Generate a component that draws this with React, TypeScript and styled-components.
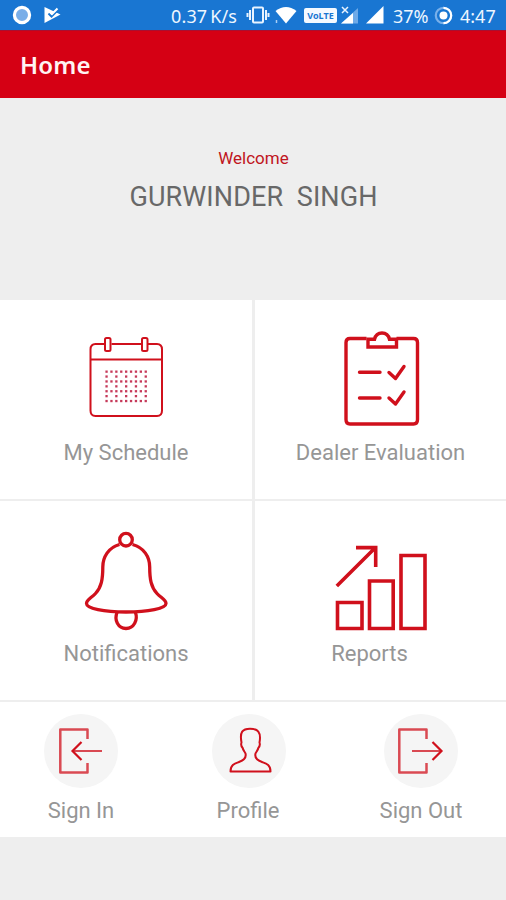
import React from 'react';
import styled, { createGlobalStyle } from 'styled-components';

const RED = '#d0101c';

const GlobalStyle = createGlobalStyle`
  * { box-sizing: border-box; }
  body { margin: 0; background: #eeeeee; font-family: Roboto, "Liberation Sans", sans-serif; }
  svg { display: block; flex: none; }
`;

const Screen = styled.div`
  width: 506px;
  height: 900px;
  display: flex;
  flex-direction: column;
  background: #eeeeee;
  overflow: hidden;
`;

const StatusBar = styled.div`
  height: 30px;
  flex: none;
  display: flex;
  align-items: center;
  background: #1976d2;
  color: #eef6ff;
`;

const StatusText = styled.span<{ $left: number; $width: number; $spacing?: number }>`
  flex: none;
  width: ${(p) => p.$width}px;
  margin-left: ${(p) => p.$left}px;
  padding-top: 1px;
  font: 400 18px/30px "Noto Sans", sans-serif;
  letter-spacing: ${(p) => p.$spacing ?? 0}px;
  word-spacing: -2px;
  white-space: nowrap;
`;

const StatusIcon = styled.svg<{ $left: number }>`
  margin-left: ${(p) => p.$left}px;
`;

const VolteBadge = styled.span`
  flex: none;
  width: 33px;
  height: 15px;
  margin-left: 7px;
  border-radius: 2px;
  background: #f4f9ff;
  color: #1976d2;
  font: 700 9px/15px "Noto Sans", sans-serif;
  text-align: center;
  white-space: nowrap;
`;

const AppBar = styled.header`
  height: 68px;
  flex: none;
  display: flex;
  align-items: center;
  padding: 1px 20px 0;
  background: #d50014;
  border-top: 1px solid #a90f30;
  color: #fff3f3;
`;

const Title = styled.h1`
  margin: 0;
  font: 600 24px/32px "Noto Sans", sans-serif;
  letter-spacing: 0.2px;
`;

const Greeting = styled.section`
  height: 201px;
  flex: none;
  display: flex;
  flex-direction: column;
  align-items: center;
  padding: 50px 0 0 1px;
`;

const Welcome = styled.div`
  font-size: 17px;
  line-height: 20px;
  color: #c01421;
`;

const UserName = styled.div`
  margin-top: 13px;
  font-size: 27px;
  line-height: 32px;
  letter-spacing: 0.1px;
  color: #686868;
  white-space: pre;
`;

const TileGrid = styled.main`
  flex: none;
  display: grid;
  grid-template-columns: 252px 251px;
  grid-template-rows: 199px 199px;
  gap: 2px 3px;
  padding: 1px 0 2px;
`;

const Tile = styled.div`
  display: flex;
  flex-direction: column;
  align-items: center;
  padding-top: 26px;
  background: #fff;
`;

const Label = styled.span<{ $shift?: number }>`
  font-size: 22px;
  line-height: 28px;
  color: #969696;
  white-space: nowrap;
  margin-top: 3px;
  margin-right: ${(p) => p.$shift ?? 0}px;
`;

const BottomNav = styled.nav`
  height: 135px;
  flex: none;
  display: grid;
  grid-template-columns: 162px 174px 170px;
  background: #fff;
`;

const NavItem = styled.div`
  display: flex;
  flex-direction: column;
  align-items: center;
  padding-top: 12px;
`;

const NavCircle = styled.div`
  width: 74px;
  height: 74px;
  flex: none;
  border-radius: 50%;
  background: #f5f5f5;
`;

const NavLabel = styled(Label)`
  margin-top: 9px;
`;

const Line = styled.g<{ $w: number }>`
  fill: none;
  stroke: ${RED};
  stroke-width: ${(p) => p.$w};
`;

const DOT_ROWS = [0, 1, 2, 3, 4, 5, 6];
const DOT_COLS = [0, 1, 2, 3, 4, 5, 6, 7, 8];

const CalendarIcon = () => (
  <svg width="100" height="110" viewBox="76 326 100 110">
    <Line $w={2}>
      <path d="M104.500 344H95.500Q90.500 344 90.500 349.500V410.500Q90.500 416 95.500 416H157Q162 416 162 410.500V349.500Q162 344 157 344H148M111.500 344H141" />
      <path d="M91 359.500H162" strokeWidth="1.8" />
      <rect x="105" y="338" width="5.500" height="13" rx="1.500" />
      <rect x="142" y="338" width="5.500" height="13" rx="1.500" />
    </Line>
    {DOT_ROWS.map((r) =>
      DOT_COLS.filter((c) => r % 2 === 0 || c % 2 === 0).map((c) => (
        <rect key={`${r}-${c}`} x={105.400 + c * 4.9} y={370.500 + r * 4.9} width="2.300" height="2.300" fill="#c63a5a" />
      )),
    )}
  </svg>
);

const ClipboardIcon = () => (
  <svg width="100" height="110" viewBox="330.5 326 100 110">
    <Line $w={3.4} strokeLinejoin="round">
      <path d="M366 338.500H349.500Q345.500 338.500 345.500 342.500V419.500Q345.500 424 349.500 424H413Q417 424 417 419.500V342.500Q417 338.500 413 338.500H396" />
      <path d="M367.500 339.300V347H396V339.300H389Q387.500 333 381.500 333Q375.500 333 374 339.300Z" strokeLinejoin="miter" />
      <g strokeLinecap="round">
        <path d="M359 372.300H379.500M359 398H379.500" />
        <path d="M388.500 372.500L395 378.500L403.500 366.500M388.500 398L395 404L403.500 392" />
      </g>
    </Line>
  </svg>
);

const BellIcon = () => (
  <svg width="100" height="110" viewBox="76 527 100 110">
    <Line $w={3.3}>
      <circle cx="126" cy="539.700" r="6.300" />
      <path d="M119.500 544.500C108.500 547.500 102.800 557 102.800 567C102.800 579 101.500 587 95.500 593.500C91.500 598 86.500 599.500 86.500 603.500C86.500 608.500 104 612 126 612C148 612 166 608.500 166 603.500C166 599.500 161 598 157 593.500C151 587 149.700 579 149.700 567C149.700 557 144 547.500 132.500 544.500" />
      <path d="M117 612.500C114 620 118 628.500 126 628.500C134 628.500 138 620 135.500 612.500" />
    </Line>
  </svg>
);

const ChartIcon = () => (
  <svg width="100" height="110" viewBox="330.5 527 100 110">
    <Line $w={3.6}>
      <path d="M337 602.500H361.500V628.500H337ZM369 581H392.700V628.500H369ZM400.500 555.500H424.500V628.500H400.500Z" />
      <path d="M336.300 586L374 548.500M355.500 547.600H375.200V567" />
    </Line>
  </svg>
);

const SignInIcon = () => (
  <svg width="74" height="74" viewBox="44 714 74 74">
    <Line $w={2.5} opacity=".75">
      <path d="M87.500 739V729.500H60.300V772.500H87.500V763" strokeLinejoin="round" />
      <path d="M73 751H102" strokeWidth="2" />
    </Line>
    <Line $w={2.2}>
      <path d="M81.500 742L72.500 751L81.500 760" />
    </Line>
  </svg>
);

const ProfileIcon = () => (
  <svg width="74" height="74" viewBox="212 714 74 74">
    <Line $w={2} strokeLinejoin="round">
      <path d="M230.500 771.500C230.500 764.500 235 763.500 239 762C244.500 760 246.500 757.500 245.500 753.500C244.500 751.500 243 750 242.700 748C241.300 746.500 240.800 744.500 241.500 742.500C239.500 732 242.500 728.700 250 728.700C257.500 728.700 261.500 732 259.500 742.500C260.200 744.500 259.700 746.500 258.300 748C258 750 256.500 751.500 255.500 753.500C254.500 757.500 256.500 760 262 762C266 763.500 270.500 764.500 270.500 771.500Z" />
    </Line>
  </svg>
);

const SignOutIcon = () => (
  <svg width="74" height="74" viewBox="384 714 74 74">
    <Line $w={2.5} opacity=".75">
      <path d="M426.500 739V729.500H399.300V772.500H426.500V763" strokeLinejoin="round" />
      <path d="M412 751H441" strokeWidth="2" />
    </Line>
    <Line $w={2.2}>
      <path d="M432.500 742L441.500 751L432.500 760" />
    </Line>
  </svg>
);

const TILES = [
  { label: 'My Schedule', Icon: CalendarIcon },
  { label: 'Dealer Evaluation', Icon: ClipboardIcon },
  { label: 'Notifications', Icon: BellIcon },
  { label: 'Reports', Icon: ChartIcon, shift: 22 },
];

const NAV = [
  { label: 'Sign In', Icon: SignInIcon },
  { label: 'Profile', Icon: ProfileIcon, shift: 2 },
  { label: 'Sign Out', Icon: SignOutIcon },
];

export default function App() {
  return (
    <Screen>
      <GlobalStyle />
      <StatusBar>
        <StatusIcon $left={12} width="20" height="20" viewBox="0 0 20 20">
          <circle cx="10" cy="10" r="7.600" fill="#79aee8" stroke="#fff" strokeWidth="3.200" />
        </StatusIcon>
        <StatusIcon $left={12} width="17" height="18" viewBox="0 0 17 18">
          <path d="M.5 1L16.500 8.500L.5 17Z" fill="#fff" />
          <path d="M4.500 7.500L7.500 10.500L14 4" fill="none" stroke="#1976d2" strokeWidth="2" />
          <path d="M5.500 5.500L8 8L13.500 2.500" fill="none" stroke="#fff" strokeWidth="2" />
        </StatusIcon>
        <StatusText $left={110} $width={69} $spacing={0.15}>0.37 K/s</StatusText>
        <StatusIcon $left={6} width="24" height="18" viewBox="0 0 24 18">
          <g fill="none" stroke="#e8f3ff" strokeWidth="2">
            <rect x="7" y="1.500" width="10" height="15" rx="1" />
            <path d="M4 4V14M20 4V14M1.500 7V11M22.500 7V11" />
          </g>
        </StatusIcon>
        <StatusIcon $left={5} width="22" height="18" viewBox="0 0 22 18">
          <path d="M.5 5Q11 -3 21.500 5L11 17.500Z" fill="#fff" />
          <path d="M1.500 14V17" stroke="#a9cff5" strokeWidth="1.500" />
        </StatusIcon>
        <VolteBadge>VoLTE</VolteBadge>
        <StatusIcon $left={4} width="18" height="18" viewBox="0 0 18 18">
          <path d="M0 17.500L17 2V17.500Z" fill="#6eaae8" />
          <path d="M0 17.500L12 7V17.500Z" fill="#fff" />
          <path d="M1 1L7 7M7 1L1 7" stroke="#e8f3ff" strokeWidth="1.500" />
        </StatusIcon>
        <StatusIcon $left={7} width="18" height="18" viewBox="0 0 18 18">
          <path d="M0 17.500L17.500 0V17.500Z" fill="#fff" />
        </StatusIcon>
        <StatusText $left={9} $width={37}>37%</StatusText>
        <StatusIcon $left={4} width="19" height="19" viewBox="0 0 19 19">
          <circle cx="9.500" cy="9.500" r="7.700" fill="none" stroke="#79b0ea" strokeWidth="2.200" />
          <path d="M9.500 1.800A7.700 7.700 0 0 1 9.500 17.200" fill="none" stroke="#fff" strokeWidth="2.200" />
          <circle cx="9.500" cy="9.500" r="4" fill="#fff" />
        </StatusIcon>
        <StatusText $left={7} $width={38}>4:47</StatusText>
      </StatusBar>
      <AppBar>
        <Title>Home</Title>
      </AppBar>
      <Greeting>
        <Welcome>Welcome</Welcome>
        <UserName>{'GURWINDER  SINGH'}</UserName>
      </Greeting>
      <TileGrid>
        {TILES.map(({ label, Icon, shift }) => (
          <Tile key={label}>
            <Icon />
            <Label $shift={shift}>{label}</Label>
          </Tile>
        ))}
      </TileGrid>
      <BottomNav>
        {NAV.map(({ label, Icon, shift }) => (
          <NavItem key={label}>
            <NavCircle>
              <Icon />
            </NavCircle>
            <NavLabel $shift={shift}>{label}</NavLabel>
          </NavItem>
        ))}
      </BottomNav>
    </Screen>
  );
}
